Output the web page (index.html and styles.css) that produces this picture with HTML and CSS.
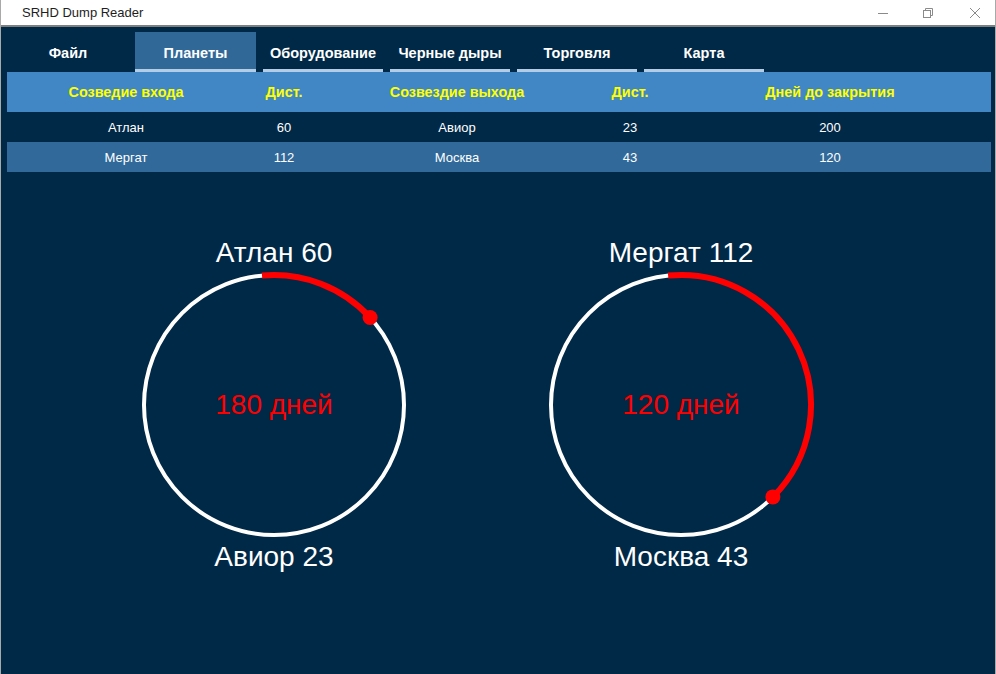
FILE: index.html
```html
<!DOCTYPE html>
<html lang="ru">
<head>
<meta charset="utf-8">
<title>SRHD Dump Reader</title>
<link rel="stylesheet" href="styles.css">
</head>
<body>
<div class="window">
  <div class="titlebar">
    <span class="title">SRHD Dump Reader</span>
    <div class="controls">
      <svg class="ctl ctl-min" width="10" height="10" viewBox="0 0 10 10"><path d="M0 5.5H10" stroke="#8a8a8a" stroke-width="1"/></svg>
      <svg class="ctl ctl-max" width="10" height="10" viewBox="0 0 10 10"><rect x="0.5" y="2.5" width="7" height="7" fill="none" stroke="#8a8a8a"/><path d="M2.5 2.5V0.5H9.5V7.5H7.5" fill="none" stroke="#8a8a8a"/></svg>
      <svg class="ctl ctl-close" width="10" height="10" viewBox="0 0 10 10"><path d="M0 0L10 10M10 0L0 10" stroke="#8a8a8a" stroke-width="1"/></svg>
    </div>
  </div>
  <div class="content">
    <nav class="tabs">
      <div class="tab plain">Файл</div>
      <div class="tab active">Планеты</div>
      <div class="tab">Оборудование</div>
      <div class="tab">Черные дыры</div>
      <div class="tab">Торговля</div>
      <div class="tab">Карта</div>
    </nav>
    <div class="table">
      <div class="trow thead">
        <div>Созведие входа</div><div>Дист.</div><div>Созвездие выхода</div><div>Дист.</div><div>Дней до закрытия</div>
      </div>
      <div class="trow">
        <div>Атлан</div><div>60</div><div>Авиор</div><div>23</div><div>200</div>
      </div>
      <div class="trow alt">
        <div>Мергат</div><div>112</div><div>Москва</div><div>43</div><div>120</div>
      </div>
    </div>
    <div class="gauges">
      <div class="gauge">
        <div class="glabel">Атлан 60</div>
        <div class="dial">
          <svg width="270" height="270" viewBox="0 0 270 270">
            <circle cx="135" cy="135" r="130" fill="none" stroke="#ffffff" stroke-width="4"/>
            <path d="M123 5.6A130 130 0 0 1 231.1 47.5" fill="none" stroke="#ff0000" stroke-width="6"/>
            <circle cx="231.1" cy="47.5" r="7.5" fill="#ff0000"/>
          </svg>
          <div class="days">180 дней</div>
        </div>
        <div class="glabel bottom">Авиор 23</div>
      </div>
      <div class="gauge">
        <div class="glabel">Мергат 112</div>
        <div class="dial">
          <svg width="270" height="270" viewBox="0 0 270 270">
            <circle cx="135" cy="135" r="130" fill="none" stroke="#ffffff" stroke-width="4"/>
            <path d="M122.1 5.6A130 130 0 0 1 226.9 226.9" fill="none" stroke="#ff0000" stroke-width="6"/>
            <circle cx="226.9" cy="226.9" r="7.5" fill="#ff0000"/>
          </svg>
          <div class="days">120 дней</div>
        </div>
        <div class="glabel bottom">Москва 43</div>
      </div>
    </div>
  </div>
</div>
</body>
</html>
```
FILE: styles.css
```css
html, body {
  margin: 0;
  padding: 0;
  background: #002947;
  font-family: "Liberation Sans", Arial, sans-serif;
}

.window {
  width: 996px;
  height: 674px;
  box-sizing: border-box;
  border-left: 1px solid #a9a9a9;
  border-right: 1px solid #a9a9a9;
  background: #002947;
  overflow: hidden;
}

.titlebar {
  height: 25px;
  background: #ffffff;
  border-bottom: 2px solid #7f7f7f;
  display: flex;
  align-items: center;
}

.title {
  margin-left: 21px;
  font-size: 13px;
  color: #1e1e1e;
}

.controls {
  margin-left: auto;
  display: flex;
  align-items: center;
  padding-right: 15px;
}

.ctl { display: block; }
.ctl-max { margin-left: 35px; }
.ctl-close { margin-left: 37px; }

.content {
  padding: 5px 4px 0 6px;
}

.tabs {
  display: flex;
  gap: 7px;
  height: 40px;
  padding-left: 1px;
}

.tab {
  width: 120px;
  box-sizing: border-box;
  border-bottom: 3px solid #b4cde6;
  color: #ffffff;
  font-weight: bold;
  font-size: 14.5px;
  display: flex;
  align-items: center;
  justify-content: center;
  padding-top: 4px;
}

.tab.plain { border-bottom-color: transparent; }

.tab.active {
  width: 121px;
  background: #306998;
}

.trow {
  display: grid;
  grid-template-columns: 238px 78px 268px 78px 1fr;
  height: 30px;
  align-items: center;
  text-align: center;
  color: #ffffff;
  font-size: 13px;
}

.trow.thead {
  height: 40px;
  background: #4187c5;
  color: #ffff00;
  font-weight: bold;
  font-size: 14.4px;
}

.trow.alt { background: #316a9a; }

.gauges {
  display: flex;
  gap: 107px;
  padding: 65px 0 0 117px;
}

.gauge {
  width: 300px;
  display: flex;
  flex-direction: column;
  align-items: center;
}

.glabel {
  font-size: 28px;
  line-height: 32px;
  height: 32px;
  color: #ffffff;
}

.dial {
  position: relative;
  width: 270px;
  height: 270px;
  margin-top: 1px;
}

.dial svg { display: block; }

.days {
  position: absolute;
  inset: 0;
  display: flex;
  align-items: center;
  justify-content: center;
  color: #ff0000;
  font-size: 28px;
  line-height: 32px;
}

.glabel.bottom { margin-top: 1px; }
```
